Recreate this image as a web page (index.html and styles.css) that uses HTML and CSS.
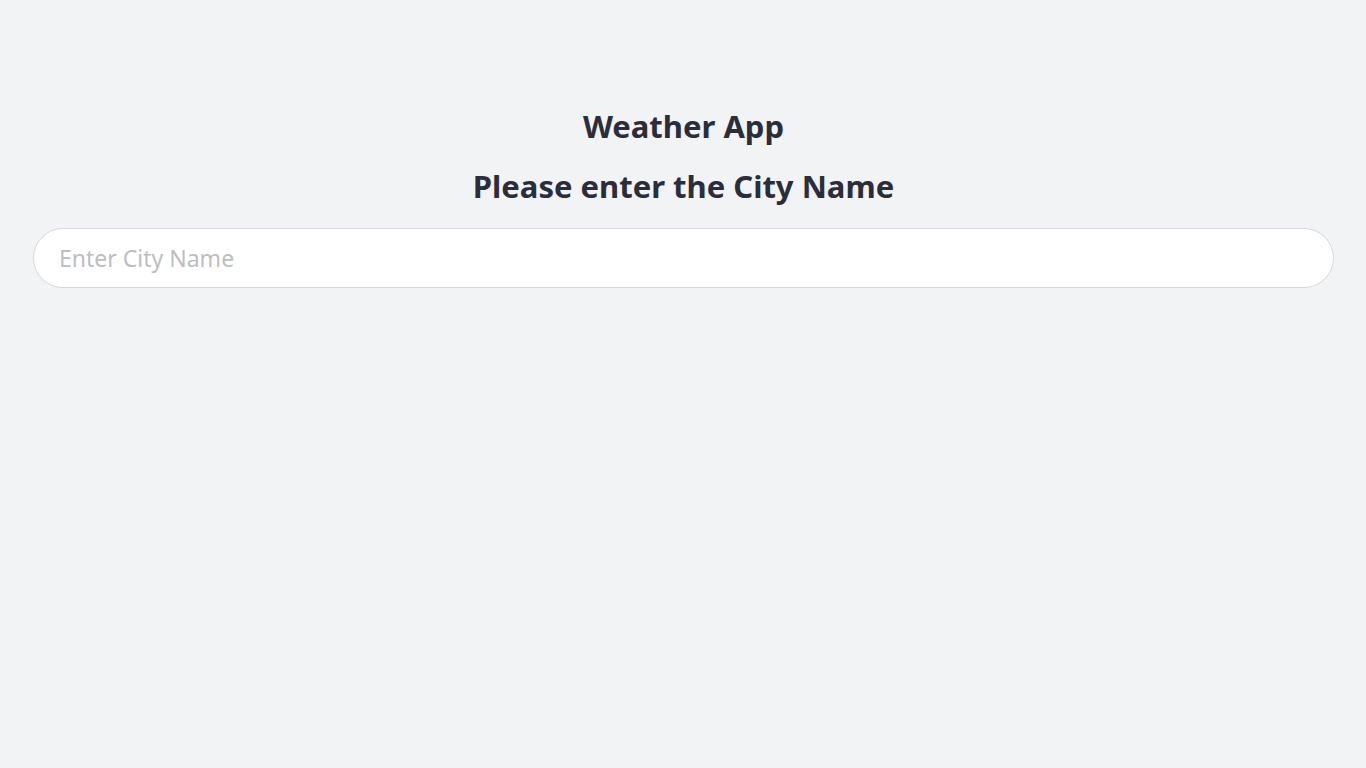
FILE: index.html
```html
<!DOCTYPE html>
<html lang="en">
<head>
<meta charset="utf-8">
<title>Weather App</title>
<link rel="stylesheet" href="styles.css">
</head>
<body>
<main class="app">
  <h1 class="title">Weather App</h1>
  <h2 class="subtitle">Please enter the City Name</h2>
  <input class="city-input" type="text" placeholder="Enter City Name">
</main>
</body>
</html>
```

FILE: styles.css
```css
html {
  overflow-y: scroll;
  overflow-x: hidden;
  background: #f2f3f5;
}
body {
  margin: 0;
  font-family: "Noto Sans", "Open Sans", sans-serif;
  color: #2b2e3a;
  overflow-x: hidden;
}
.app {
  width: 100vw;
  min-height: 100vh;
  box-sizing: border-box;
  padding: 104px 32px 40px 33px;
  display: flex;
  flex-direction: column;
  align-items: center;
}
.title,
.subtitle {
  margin: 0;
  font-size: 31px;
  font-weight: 700;
  line-height: 44px;
  text-align: center;
}
.subtitle {
  margin-top: 16px;
}
.city-input {
  margin-top: 20px;
  width: 100%;
  height: 60px;
  box-sizing: border-box;
  border: 1px solid #d6d7e0;
  border-radius: 30px;
  background: #fff;
  padding: 0 25px 1px;
  font-family: inherit;
  font-size: 23px;
  color: #2b2e3a;
  outline: none;
}
.city-input::placeholder {
  color: #bdbdc2;
}
```
